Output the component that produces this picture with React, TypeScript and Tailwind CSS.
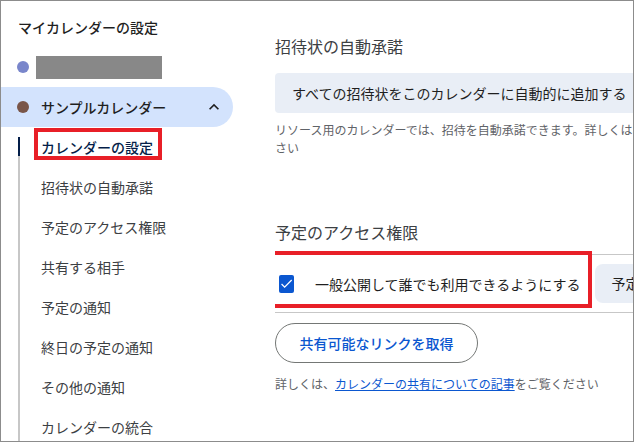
import React from "react";

const navItems = [
  "招待状の自動承諾",
  "予定のアクセス権限",
  "共有する相手",
  "予定の通知",
  "終日の予定の通知",
  "その他の通知",
  "カレンダーの統合",
];

export default function App() {
  return (
    <div className="w-[634px] h-[442px] border border-[#8c8c8c] bg-white flex overflow-hidden font-['Noto_Sans_CJK_JP','Noto_Sans',sans-serif] text-[#1f1f1f]">
      {/* Left nav */}
      <aside className="w-[274px] shrink-0 flex flex-col overflow-hidden">
        <div className="h-[46px] shrink-0 pt-[16px] pl-[17px] text-[14px] leading-[20px] font-medium text-[#1f1f1f]">
          マイカレンダーの設定
        </div>
        <div className="h-[40px] shrink-0 flex items-center pl-[16px]">
          <span className="w-[12px] h-[12px] rounded-full bg-[#7986cb]" />
          <span className="ml-[7px] w-[126px] h-[23px] bg-[#888888]" />
        </div>
        <div className="h-[40px] shrink-0 w-[232px] rounded-r-full bg-[#d3e3fd] flex items-center pl-[16px]">
          <span className="w-[12px] h-[12px] rounded-full bg-[#795548]" />
          <span className="ml-[12px] text-[14px] leading-[20px] font-medium text-[#1f1f1f]">
            サンプルカレンダー
          </span>
          <svg
            className="ml-auto mr-[9px]"
            width="20"
            height="20"
            viewBox="0 0 24 24"
            fill="#1f1f1f"
          >
            <path d="M7.41 15.41L12 10.83l4.59 4.58L18 14l-6-6-6 6z" />
          </svg>
        </div>
        <div className="relative shrink-0 flex flex-col">
          <div className="absolute left-[17px] top-[10px] bottom-0 w-[2px] bg-[#c7c7c7]" />
          <div className="absolute left-[17px] top-[10px] h-[19px] w-[2px] bg-[#041e49]" />
          <div className="relative h-[40px] shrink-0 flex items-center pl-[40px] text-[14px] leading-[20px] font-medium text-[#041e49]">
            カレンダーの設定
            <div className="absolute left-[33px] top-[1px] w-[128px] h-[32px] border-[4px] border-[#e81f27]" />
          </div>
          {navItems.map((t) => (
            <div
              key={t}
              className="h-[40px] shrink-0 flex items-center pl-[40px] text-[14px] leading-[20px] text-[#3c4043]"
            >
              {t}
            </div>
          ))}
        </div>
      </aside>

      {/* Main */}
      <main className="flex-1 min-w-0 overflow-hidden flex flex-col">
        <div className="shrink-0 pt-[35px] text-[16px] leading-[20px] text-[#3c4043] whitespace-nowrap">
          招待状の自動承諾
        </div>
        <div className="mt-[17px] h-[40px] w-[420px] shrink-0 rounded-[4px] bg-[#e9eef6] flex items-center pl-[17px] text-[14px] text-[#1f1f1f] whitespace-nowrap">
          すべての招待状をこのカレンダーに自動的に追加する
        </div>
        <div className="shrink-0 mt-[8px] text-[12px] leading-[18px] text-[#5f6368] whitespace-nowrap">
          <div>リソース用のカレンダーでは、招待を自動承諾できます。詳しくは、ヘルプをご覧くだ</div>
          <div>さい</div>
        </div>
        <div className="shrink-0 mt-[65px] text-[16px] leading-[20px] text-[#3c4043] whitespace-nowrap">
          予定のアクセス権限
        </div>
        <div className="relative mt-[12px] h-[59px] w-[420px] shrink-0 border-y border-[#c7c7c7] flex items-center">
          <div className="ml-[4px] w-[18px] h-[18px] rounded-[2px] bg-[#0b57d0] flex items-center justify-center">
            <svg width="15" height="15" viewBox="0 0 24 24" fill="white">
              <path d="M9 16.2L4.8 12l-1.4 1.4L9 19 21 7l-1.4-1.4L9 16.2z" />
            </svg>
          </div>
          <span className="ml-[21px] text-[14px] leading-[20px] text-[#1f1f1f] whitespace-nowrap">
            一般公開して誰でも利用できるようにする
          </span>
          <div className="ml-[15px] h-[39px] pl-[16px] pr-[16px] rounded-[8px] bg-[#e9eef6] flex items-center text-[14px] text-[#1f1f1f] whitespace-nowrap">
            予定の詳細をすべて表示
          </div>
          <div className="absolute left-[-16px] top-[-4px] w-[333px] h-[57px] border-[4px] border-[#e81f27]" />
        </div>
        <div className="shrink-0 mt-[10px]">
          <button className="h-[40px] w-[203px] rounded-full border border-[#747775] text-[14px] font-medium text-[#0b57d0] flex items-center justify-center whitespace-nowrap">
            共有可能なリンクを取得
          </button>
        </div>
        <div className="shrink-0 mt-[12px] text-[12px] leading-[18px] text-[#5f6368] whitespace-nowrap">
          詳しくは、
          <span className="text-[#0b57d0] underline">カレンダーの共有についての記事</span>
          をご覧ください
        </div>
      </main>
    </div>
  );
}
